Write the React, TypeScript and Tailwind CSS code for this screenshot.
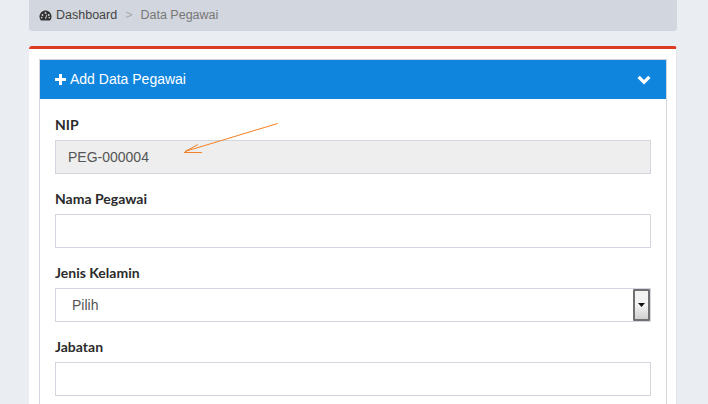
function Field({ label, children }: { label: string; children: React.ReactNode }) {
  return (
    <div className="mb-[15px]">
      <label className="block h-[20px] mb-[5px] text-[14px] leading-[20px] font-bold text-[#2b2b2b] font-['Lato',sans-serif]">
        {label}
      </label>
      {children}
    </div>
  )
}

function GaugeIcon() {
  return (
    <svg width="13" height="11" viewBox="0 0 12 11" className="mr-[4px]">
      <path d="M6 0.5C2.700 0.5 0 3.200 0 6.500c0 1.600.5 2.900 1.400 3.900h9.200C11.500 9.400 12 8.100 12 6.500 12 3.200 9.300.5 6 .5z" fill="#333" />
      <circle cx="3" cy="5" r="0.9" fill="#d2d6de" />
      <circle cx="6" cy="3" r="0.9" fill="#d2d6de" />
      <circle cx="9.200" cy="5" r="0.9" fill="#d2d6de" />
      <circle cx="2.200" cy="7.600" r="0.8" fill="#d2d6de" />
      <circle cx="9.800" cy="7.600" r="0.8" fill="#d2d6de" />
      <path d="M5.500 8.500L7 4.500l.6.200L6.600 8.800z" fill="#d2d6de" />
    </svg>
  )
}

export default function App() {
  const inputCls = 'block w-full h-[34px] border border-[#d2d6de] bg-white'

  return (
    <div className="h-[404px] overflow-hidden bg-[#eaedf2] pl-[29px] pr-[31px] font-['Liberation_Sans',sans-serif]">
      <div className="flex h-[31px] items-center rounded-b-[3px] bg-[#d2d6de] pl-[10px] text-[12.5px]">
        <GaugeIcon />
        <span className="text-[#444]">Dashboard</span>
        <span className="mx-[8px] text-[#aaa]">&gt;</span>
        <span className="text-[#777]">Data Pegawai</span>
      </div>

      <div className="mt-[15px] h-[400px] rounded-t-[3px] border-t-[3px] border-[#dd3a22] border-r border-r-[#e3e5ea] bg-white pl-[10px] pr-[9px] pt-[10px]">
        <div className="relative h-[400px] border border-[#d2d6de]">
          <div className="flex h-[39px] items-center justify-between bg-[#0f85de] pl-[15px] pr-[15px] text-white">
            <div className="flex items-center text-[14px]">
              <svg width="11" height="11" viewBox="0 0 11 11" className="mr-[4px]">
                <path d="M4 0h3v4h4v3H7v4H4V7H0V4h4z" fill="#fff" />
              </svg>
              Add Data Pegawai
            </div>
            <svg width="14" height="10" viewBox="0 0 14 10">
              <path d="M0.500 3L2.800 0.700 7 4.900 11.200 0.700 13.500 3 7 9.500z" fill="#fff" />
            </svg>
          </div>

          <div className="px-[15px] pt-[16px]">
            <Field label="NIP">
              <div className={`${inputCls} !bg-[#eeeeee] pl-[12px] text-[14px] leading-[32px] text-[#555]`}>PEG-000004</div>
            </Field>
            <Field label="Nama Pegawai">
              <div className={inputCls} />
            </Field>
            <Field label="Jenis Kelamin">
              <div className={`${inputCls} flex items-center justify-between pl-[16px] text-[14px] text-[#555]`}>
                Pilih
                <div className="flex h-[32px] w-[17px] items-center justify-center rounded-[1px] border-2 border-[#707070] bg-gradient-to-b from-[#f3f3f3] from-50% to-[#cfcfcf]">
                  <svg width="7" height="4" viewBox="0 0 7 4">
                    <path d="M0 0h7L3.500 4z" fill="#111" />
                  </svg>
                </div>
              </div>
            </Field>
            <Field label="Jabatan">
              <div className={inputCls} />
            </Field>
          </div>

          <svg width="100" height="36" viewBox="0 0 100 36" className="absolute left-[142px] top-[63px]" fill="none" stroke="#f58025" strokeWidth="1">
            <path d="M95.500 0.500L3 28.500" />
            <path d="M3 28.500L16 21.500" />
            <path d="M2 29.500H20" />
          </svg>
        </div>
      </div>
    </div>
  )
}
